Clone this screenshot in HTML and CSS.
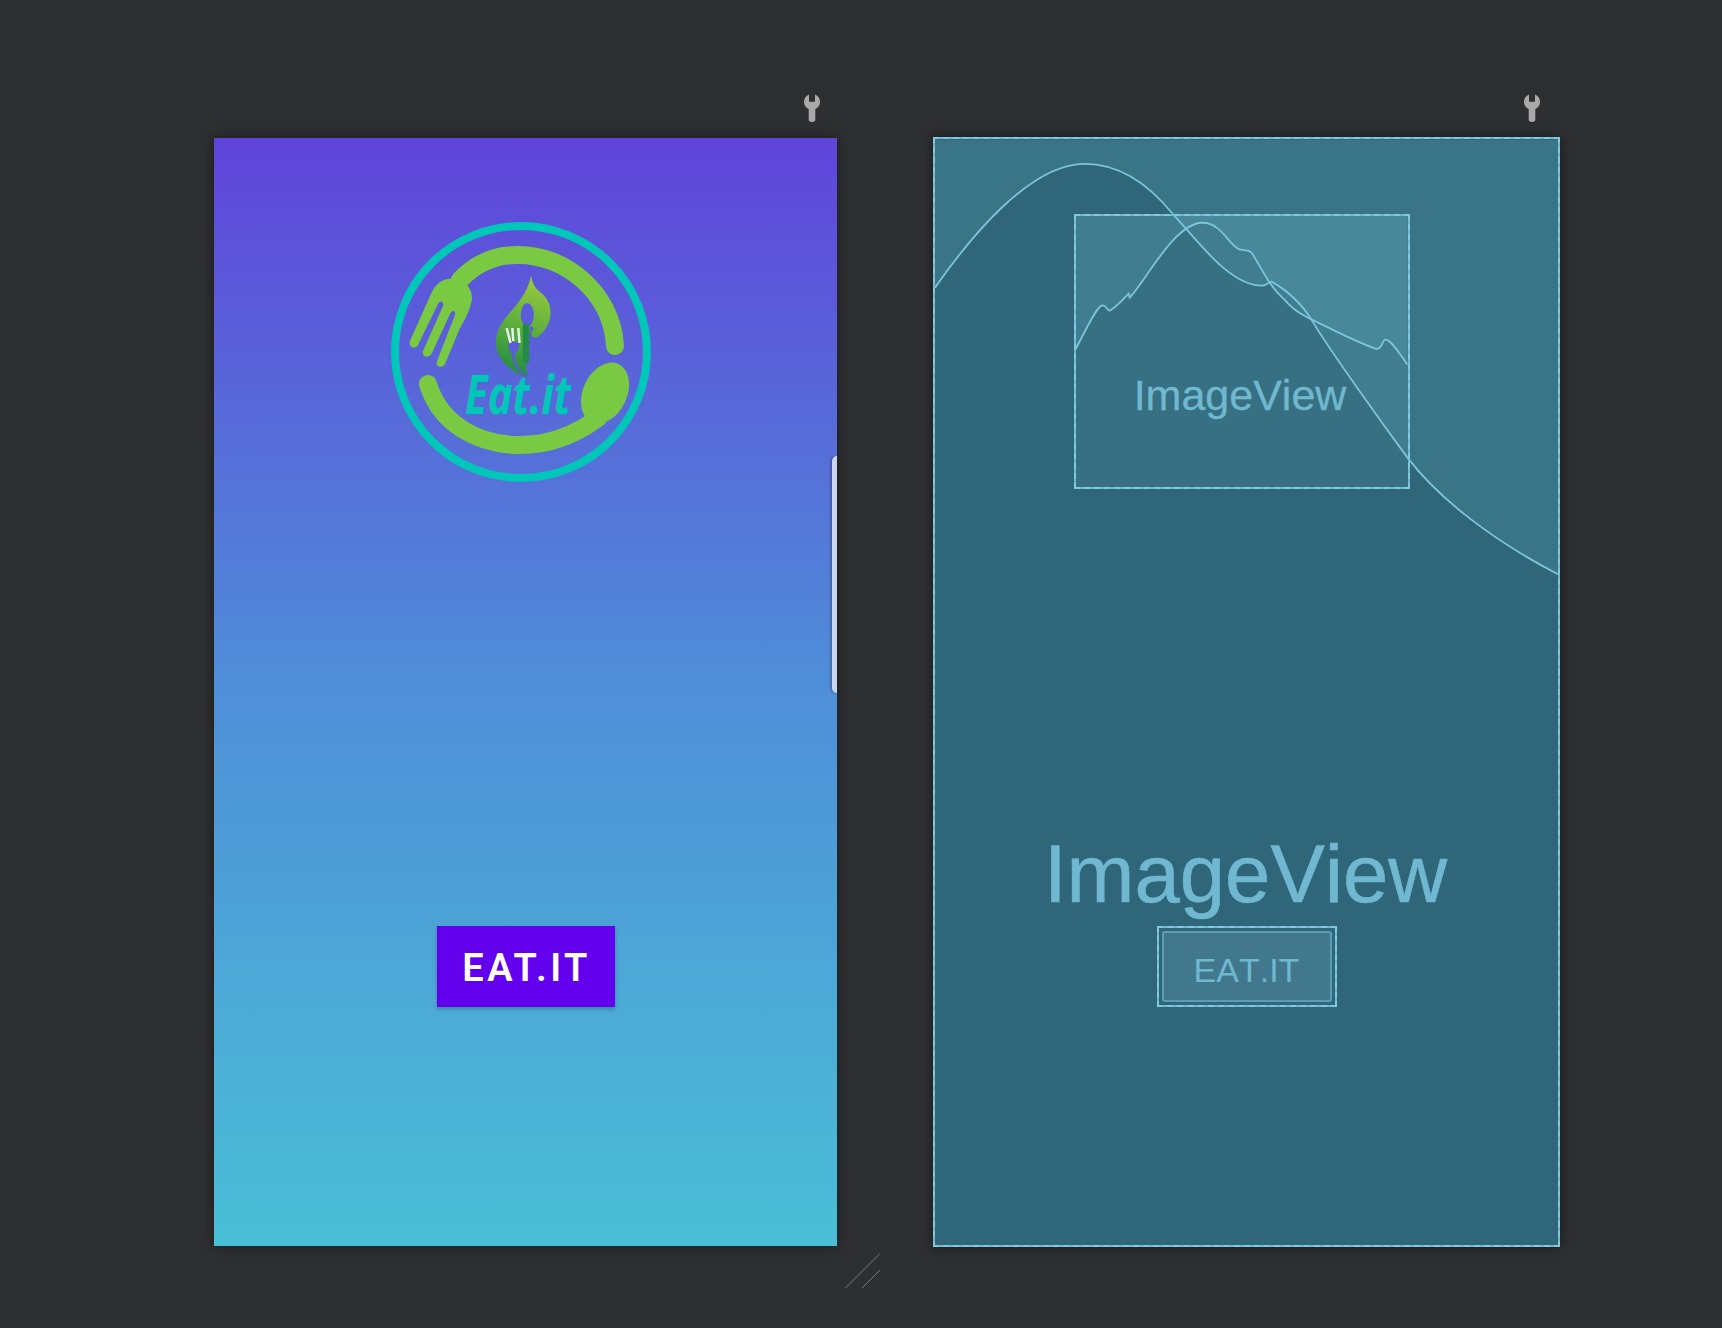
FILE: index.html
```html
<!DOCTYPE html>
<html lang="en">
<head>
    <meta charset="UTF-8">
    <title>Layout Editor</title>
    <link rel="stylesheet" href="styles.css">
</head>
<body>
    <div class="canvas">
        <!-- Design surface -->
        <section class="surface surface-design">
            <div class="surface-bar">
                <svg class="wrench" viewBox="0 0 16 28"><path d="M5 0.4V7.7H11V0.4C14 1.5 16 4.4 16 8C16 11.2 14.2 13.8 11.3 15V26C11.3 27.2 9.7 28 8 28S4.7 27.2 4.7 26V15C1.8 13.8 0 11.2 0 8C0 4.4 2 1.5 5 0.4Z"/></svg>
            </div>
            <div class="phone">
                <svg class="logo" viewBox="-26 4 336 275">
                    <defs>
                        <linearGradient id="leafFill" x1="0.6" y1="0" x2="0.4" y2="1">
                            <stop offset="0" stop-color="#9acb3c"/>
                            <stop offset="0.5" stop-color="#5fb03c"/>
                            <stop offset="1" stop-color="#228b45"/>
                        </linearGradient>
                    </defs>
                    <circle class="logo-ring" cx="141" cy="142" r="126"/>
                    <path class="logo-arc" d="M235 136 C232 82 184 44 137 45 C116 45 97 52 80 70"/>
                    <path class="logo-arc" d="M48 174 C60 214 98 235 140 235 C170 235 195 225 218 208"/>
                    <ellipse class="logo-green" cx="225" cy="183" rx="22" ry="32" transform="rotate(25 225 183)"/>
                    <path class="logo-green" d="M68 69 C82 67 92 76 92 88 C91 98 86 108 80 118 L65 154 C62 159 55 157 57 151 L75 105 C76 100 72 100 70 104 L52 143 C49 149 41 147 43 141 L63 96 C64 91 60 90 58 94 L38 135 C35 140 28 137 30 131 L50 86 C54 76 60 70 68 69Z"/>
                    <path fill="url(#leafFill)" d="M151 65 C152 73 155 78 160 82 C168 88 171 96 170.5 104 C170 114 164 122 159 126 C155 129 152 127 151 124 C151 122 153 120 154 118 L150 116 L146 154 C146 160 147 165 149 167 C135 165 117 152 116 134 C115 118 126 107 134 98 C142 88 149 78 151 65Z"/>
                    <ellipse class="logo-cut" cx="147.3" cy="105" rx="6.5" ry="11.7"/>
                    <path class="logo-stem" d="M146 117 V150"/>
                    <path class="logo-cut" d="M128 132 L140 132 L138 140 L135 143 L135 150 C137 156 142 163 149 167 C140 165 132 155 132 145 L129 140Z"/>
                    <path class="logo-tines" d="M126.7 118 L130.5 133 M132.3 118 L133.3 131 M138.3 118 L139.5 133"/>
                    <text class="logo-text" x="85" y="204" textLength="106" lengthAdjust="spacingAndGlyphs">Eat.it</text>
                </svg>
                <button class="eat-btn">EAT.IT</button>
                <div class="drawer-handle"></div>
            </div>
            <svg class="resize-grip" viewBox="0 0 36 36"><path d="M0.5 35L35 0.5M17 35L35 17"/></svg>
        </section>

        <!-- Blueprint surface -->
        <section class="surface surface-blueprint">
            <div class="surface-bar bar-blueprint">
                <svg class="wrench" viewBox="0 0 16 28"><path d="M5 0.4V7.7H11V0.4C14 1.5 16 4.4 16 8C16 11.2 14.2 13.8 11.3 15V26C11.3 27.2 9.7 28 8 28S4.7 27.2 4.7 26V15C1.8 13.8 0 11.2 0 8C0 4.4 2 1.5 5 0.4Z"/></svg>
            </div>
            <div class="blueprint bp-dash">
                <svg class="bp-curves" viewBox="0 0 624 1106">
                    <path class="bp-fill" d="M0 148 C35 98 95 24 150 24 C195 24 225 58 238 74 C265 103 295 146 328 146 C332 146 334 142 337 142 C352 150 368 165 377 180 C395 210 445 280 473 318 C505 360 560 402 624 435 V0 H0Z"/>
                    <path class="bp-fill" d="M140 211 C150 193 161 168 167 166 C171 164 172 171 175 171 C181 168 188 160 194 154 L195 158 C212 140 240 83 268 83 C288 83 295 108 306 110 C312 111 316 110 319 116 C328 130 335 147 350 160 C360 172 372 178 390 186 C410 196 430 205 441 209 C448 211 448 200 451 200 C457 200 466 215 473 225 V76 H140Z"/>
                    <path class="bp-line" d="M0 148 C35 98 95 24 150 24 C195 24 225 58 238 74 C265 103 295 146 328 146 C332 146 334 142 337 142 C352 150 368 165 377 180 C395 210 445 280 473 318 C505 360 560 402 624 435"/>
                    <path class="bp-line" d="M140 211 C150 193 161 168 167 166 C171 164 172 171 175 171 C181 168 188 160 194 154 L195 158 C212 140 240 83 268 83 C288 83 295 108 306 110 C312 111 316 110 319 116 C328 130 335 147 350 160 C360 172 372 178 390 186 C410 196 430 205 441 209 C448 211 448 200 451 200 C457 200 466 215 473 225"/>
                </svg>
                <div class="bp-image bp-dash">ImageView</div>
                <div class="bp-title">ImageView</div>
                <div class="bp-btn bp-dash"><span class="bp-btn-inner">EAT.IT</span></div>
            </div>
        </section>
    </div>
</body>
</html>
```

FILE: styles.css
```css
html, body {
    margin: 0;
    height: 100%;
    overflow: hidden;
}

body {
    background: #2e2f31;
    font-family: "Liberation Sans", Arial, sans-serif;
}

.canvas {
    display: flex;
    padding: 94px 0 0 214px;
}

.surface-design {
    width: 623px;
}

.surface-blueprint {
    width: 627px;
    margin-left: 96px;
}

.surface-bar {
    display: flex;
    justify-content: flex-end;
    height: 44px;
    padding-right: 17px;
}

.bar-blueprint {
    height: 43px;
    padding-right: 20px;
}

.wrench {
    width: 16px;
    height: 28px;
    fill: #a9a9a9;
}

/* left preview */
.phone {
    position: relative;
    display: flex;
    flex-direction: column;
    align-items: center;
    height: 1108px;
    background: linear-gradient(180deg, #6044da 0%, #4f8fd8 50%, #4abfd6 100%);
    box-shadow: 0 0 12px rgba(0,0,0,0.45);
}

.logo {
    width: 336px;
    height: 275px;
    margin-top: 76px;
    margin-left: -8px;
}

.logo-ring {
    fill: none;
    stroke: #00c8b8;
    stroke-width: 8;
}

.logo-arc {
    fill: none;
    stroke: #7ac943;
    stroke-width: 18;
    stroke-linecap: round;
}

.logo-green {
    fill: #7ac943;
}

.logo-cut {
    fill: #5a5cd9;
}

.logo-stem {
    fill: none;
    stroke: #228b45;
    stroke-width: 6.5;
    stroke-linecap: round;
}

.logo-tines {
    fill: none;
    stroke: #e6f2e6;
    stroke-width: 2.5;
}

.logo-text {
    font-family: "Open Sans", sans-serif;
    font-size: 54px;
    font-weight: 700;
    font-style: italic;
    fill: #00c8b8;
}

.eat-btn {
    width: 178px;
    height: 81px;
    margin-top: 437px;
    padding: 2px 0 0 2px;
    border: none;
    background: #6200ee;
    color: #fff;
    font-family: Roboto, sans-serif;
    font-size: 38px;
    font-weight: 600;
    letter-spacing: 3.4px;
    box-shadow: 0 2px 4px rgba(0,0,0,0.25);
}

.drawer-handle {
    position: absolute;
    top: 318px;
    right: 0;
    width: 5px;
    height: 237px;
    background: #c9d6f0;
    border-radius: 6px 0 0 6px;
    box-shadow: -2px 0 2px rgba(0,0,0,0.2);
}

.resize-grip {
    display: block;
    width: 36px;
    height: 36px;
    margin: 7px 0 0 631px;
    fill: none;
    stroke: #7a7a7a;
    stroke-width: 1;
}

/* right blueprint */
.bp-dash {
    border: 2px solid #6fb8cf;
}

.bp-dash::after {
    content: "";
    position: absolute;
    inset: -2px;
    border: 2px dashed #80c9df;
    pointer-events: none;
}

.blueprint {
    position: relative;
    display: flex;
    flex-direction: column;
    align-items: center;
    height: 1106px;
    background: #2f6679;
    box-shadow: 0 0 12px rgba(0,0,0,0.45);
    color: #70b8d0;
}

.bp-curves {
    position: absolute;
    top: 0;
    left: 0;
    width: 100%;
    height: 100%;
}

.bp-fill {
    fill: #7ecbe4;
    opacity: 0.14;
}

.bp-line {
    fill: none;
    stroke: #7cc4da;
    stroke-width: 1.8;
}

.bp-image {
    position: relative;
    box-sizing: border-box;
    width: 336px;
    height: 275px;
    margin: 75px 0 0 -10px;
    padding: 154px 3px 0 0;
    background: rgba(126,203,228,0.1);
    font-size: 43px;
    line-height: 50px;
    text-align: center;
    font-kerning: none;
    -webkit-text-stroke: 0.3px #70b8d0;
}

.bp-title {
    position: relative;
    height: 437px;
    box-sizing: border-box;
    padding: 338px 2px 0 0;
    font-size: 81.5px;
    line-height: 93px;
    font-kerning: none;
    -webkit-text-stroke: 0.6px #70b8d0;
}

.bp-btn {
    position: relative;
    box-sizing: border-box;
    width: 180px;
    height: 81px;
    padding: 3px;
}

.bp-btn-inner {
    display: block;
    height: 100%;
    box-sizing: border-box;
    border: 2px solid #5a9db4;
    border-radius: 3px;
    background: #41788e;
    font-size: 34px;
    line-height: 75px;
    text-align: center;
    font-kerning: none;
}
```
